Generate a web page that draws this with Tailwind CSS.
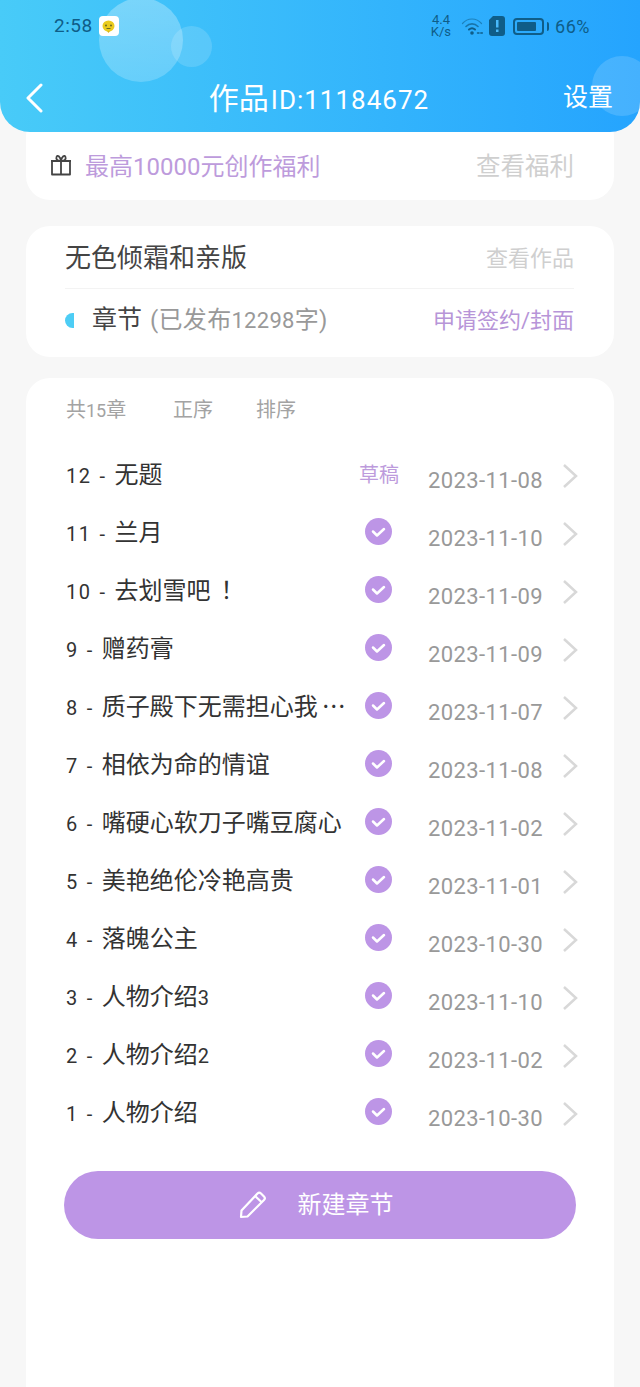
<!DOCTYPE html>
<html lang="zh">
<head>
    <meta charset="UTF-8">
    <meta name="viewport" content="width=device-width, initial-scale=1.0">
    <title>作品</title>
    <script src="https://cdn.jsdelivr.net/npm/@tailwindcss/browser@4"></script>
</head>
<body class="bg-[#f7f7f7] h-[1387px] overflow-hidden font-['Roboto','Noto_Sans_CJK_SC',sans-serif]">
    <!-- header -->
    <header class="relative z-10 h-[132px] overflow-hidden rounded-b-[30px] bg-gradient-to-r from-[#48cbf8] to-[#25a4fe]">
        <div class="absolute left-[99px] top-[-2px] h-[84px] w-[84px] rounded-full bg-gradient-to-b from-white/30 to-white/20"></div>
        <div class="absolute left-[171px] top-[26px] h-[41px] w-[41px] rounded-full bg-white/15"></div>
        <div class="absolute left-[592px] top-[56px] h-[60px] w-[60px] rounded-full bg-white/15"></div>

        <div class="relative flex h-[52px] items-center pl-[54px] pr-[50px] text-[#0f5d88]">
            <span class="text-[19px] tracking-[0.5px]">2:58</span>
            <div class="ml-[6px] flex h-[20px] w-[20px] items-center justify-center rounded-[4px] bg-white">
                <svg width="15" height="15" viewBox="0 0 15 15"><ellipse cx="7.500" cy="7" rx="6" ry="5.500" fill="#eacb1e"/><path d="M6 12h3l-1.500 2z" fill="#d9b515"/><circle cx="5" cy="6.500" r="1" fill="#6b6a1f"/><circle cx="10" cy="6.500" r="1" fill="#6b6a1f"/><path d="M5.500 9.500h4" stroke="#6b6a1f" stroke-width="1"/></svg>
            </div>
            <div class="ml-auto flex items-center">
                <div class="mr-[10px] text-center text-[13px] leading-[12px]">4.4<br>K/s</div>
                <svg class="mr-[5px]" width="23" height="20" viewBox="0 0 23 20" fill="none" stroke="#0f5d88" stroke-linecap="round">
                    <path d="M1.500 7.500C6.500 1.500 15.500 1.500 20.500 7.500" stroke-width="1.200" opacity=".55"/>
                    <path d="M5 10.500C8.500 7 13.500 7 17 10.500" stroke-width="1.600" opacity=".7"/>
                    <path d="M8 13.500C9.800 12 12.200 12 14 13.500" stroke-width="2"/>
                    <circle cx="11" cy="17" r="1.800" fill="#0f5d88" stroke="none"/>
                    <path d="M16.500 17h5" stroke-width="1.500" stroke-dasharray="1.500 1.800"/>
                </svg>
                <svg class="mr-[8px]" width="16" height="20" viewBox="0 0 16 20"><path d="M4 0h9a3 3 0 0 1 3 3v14a3 3 0 0 1-3 3H3a3 3 0 0 1-3-3V4z" fill="#0f5d88"/><rect x="7" y="4" width="2.500" height="7.500" fill="#48b9fb"/><rect x="7" y="13.500" width="2.500" height="2.500" fill="#48b9fb"/></svg>
                <div class="flex h-[17px] w-[31px] items-center rounded-[4px] border-[2px] border-[#0f5d88] p-[2px]"><div class="h-full w-[19px] rounded-[1px] bg-[#0f5d88]"></div></div>
                <div class="ml-[3px] mr-[6px] h-[9px] w-[2px] rounded-r-sm bg-[#0f5d88]"></div>
                <span class="text-[18px] tracking-[0.5px]">66%</span>
            </div>
        </div>

        <div class="relative flex h-[80px] items-center pl-[25px] pr-[27px] pt-[12px] text-white">
            <div class="w-[50px]">
                <svg width="18" height="30" viewBox="0 0 18 30" fill="none" stroke="white" stroke-width="3" stroke-linecap="round" stroke-linejoin="round"><path d="M16 2 3 15l13 13"/></svg>
            </div>
            <div class="flex flex-1 items-baseline justify-center text-[26px]"><span class="text-[30px]">作品</span><span class="ml-[2px] tracking-[1px]">ID:11184672</span></div>
            <span class="w-[50px] text-[25px]">设置</span>
        </div>
    </header>

    <main class="px-[26px]">
        <!-- benefits card -->
        <section class="mt-[-20px] flex h-[88px] items-end rounded-[24px] bg-white pb-[17px] pl-[24px] pr-[40px]">
            <div class="flex h-[32px] w-full items-center">
                <svg class="mb-[4px]" width="22" height="22" viewBox="0 0 22 22" fill="none" stroke="#444" stroke-width="1.800" stroke-linejoin="round"><rect x="2" y="7" width="18" height="13.500"/><path d="M1 7h20M11 7v13.500M11 7C8 7 5.500 5.500 6.500 3S10 2 11 7ZM11 7c3 0 5.500-1.500 4.500-4S12 2 11 7Z"/></svg>
                <span class="ml-[13px] text-[24px] text-[#bd9bdc]">最高10000元创作福利</span>
                <span class="ml-auto text-[24.500px] text-[#cfcfcf]">查看福利</span>
            </div>
        </section>

        <!-- work card -->
        <section class="mt-[26px] h-[131px] rounded-[24px] bg-white pl-[39px] pr-[40px] pt-[12px]">
            <div class="flex h-[51px] items-center justify-between border-b border-[#f3f3f3] pb-[10px]">
                <span class="text-[26px] text-[#444]">无色倾霜和亲版</span>
                <span class="text-[22px] text-[#cfcfcf]">查看作品</span>
            </div>
            <div class="flex h-[64px] items-center pb-[2px]">
                <div class="h-[15px] w-[9px] rounded-l-full bg-[#4dcdf5]"></div>
                <span class="ml-[18px] text-[25px] text-[#444]">章节</span>
                <span class="ml-[8px] text-[24px] tracking-[0.3px] text-[#999]">(已发布<span class="text-[22px]">12298</span>字)</span>
                <span class="ml-auto text-[22px] text-[#b795d8]">申请签约/封面</span>
            </div>
        </section>

        <!-- chapter card -->
        <section class="mt-[21px] h-[1100px] rounded-[24px] bg-white pl-[40px] pr-[36px]">
            <div class="flex h-[69px] items-center pb-[6px] text-[20px] text-[#a3a3a3]">
                <span class="w-[107px]">共<span class="text-[18px]">15</span>章</span>
                <span class="w-[83px]">正序</span>
                <span>排序</span>
            </div>

            <ul id="chapters" class="text-[#333]"></ul>

            <button class="ml-[-2px] mt-[28px] flex h-[68px] w-[512px] items-center justify-center rounded-full bg-[#bd95e6] pr-[8px] text-[24px] text-white">
                <svg width="28" height="28" viewBox="0 0 28 28" fill="none" stroke="white" stroke-width="2.200" stroke-linejoin="round"><path d="M2 26l.5-6.500L18.500 2.500a2.500 2.500 0 0 1 3.500 0l3 3a2.500 2.500 0 0 1 0 3.500L8.500 25.500z"/><path d="M16 5l7 6.500"/></svg>
                <span class="ml-[31px]">新建章节</span>
            </button>
        </section>
    </main>

    <script>
        const chapters = [
            ['12', '无题', '2023-11-08', true],
            ['11', '兰月', '2023-11-10'],
            ['10', '去划雪吧<span class="ml-[10px]">！</span>', '2023-11-09'],
            ['9', '赠药膏', '2023-11-09'],
            ['8', '质子殿下无需担心我<span class="ml-[4px] font-[\'Noto_Sans_CJK_SC\']">⋯</span>', '2023-11-07'],
            ['7', '相依为命的情谊', '2023-11-08'],
            ['6', '嘴硬心软刀子嘴豆腐心', '2023-11-02'],
            ['5', '美艳绝伦冷艳高贵', '2023-11-01'],
            ['4', '落魄公主', '2023-10-30'],
            ['3', '人物介绍<span class="text-[20px]">3</span>', '2023-11-10'],
            ['2', '人物介绍<span class="text-[20px]">2</span>', '2023-11-02'],
            ['1', '人物介绍', '2023-10-30'],
        ];

        const check = `<svg class="mb-[6px] ml-[6px]" width="27" height="27" viewBox="0 0 27 27"><circle cx="13.500" cy="13.500" r="13.500" fill="#bd95e6"/><path d="M8 13.500l4 4 7-6.500" fill="none" stroke="white" stroke-width="2.500" stroke-linecap="round" stroke-linejoin="round"/></svg>`;
        const draft = `<span class="w-[40px] mb-[2px] text-[20px] text-[#bd9bdc]">草稿</span>`;

        document.getElementById('chapters').innerHTML = chapters.map(([num, title, date, isDraft]) => `
            <li class="flex h-[58px] items-center">
                <span class="mb-[2px] w-[293px] whitespace-nowrap text-[24px]"><span class="text-[20px] tracking-[1.500px] [word-spacing:1.500px]">${num} - </span>${title}</span>
                ${isDraft ? draft : check}
                <span class="mt-[9px] w-[134px] text-[22px] tracking-[0.4px] text-[#999] ${isDraft ? 'ml-[29px]' : 'ml-[36px]'}">${date}</span>
                <svg width="16" height="26" viewBox="0 0 16 26" fill="none" stroke="#d8d8d8" stroke-width="2.500"><path d="M2 2l12 11L2 24"/></svg>
            </li>`).join('');
    </script>
</body>
</html>
